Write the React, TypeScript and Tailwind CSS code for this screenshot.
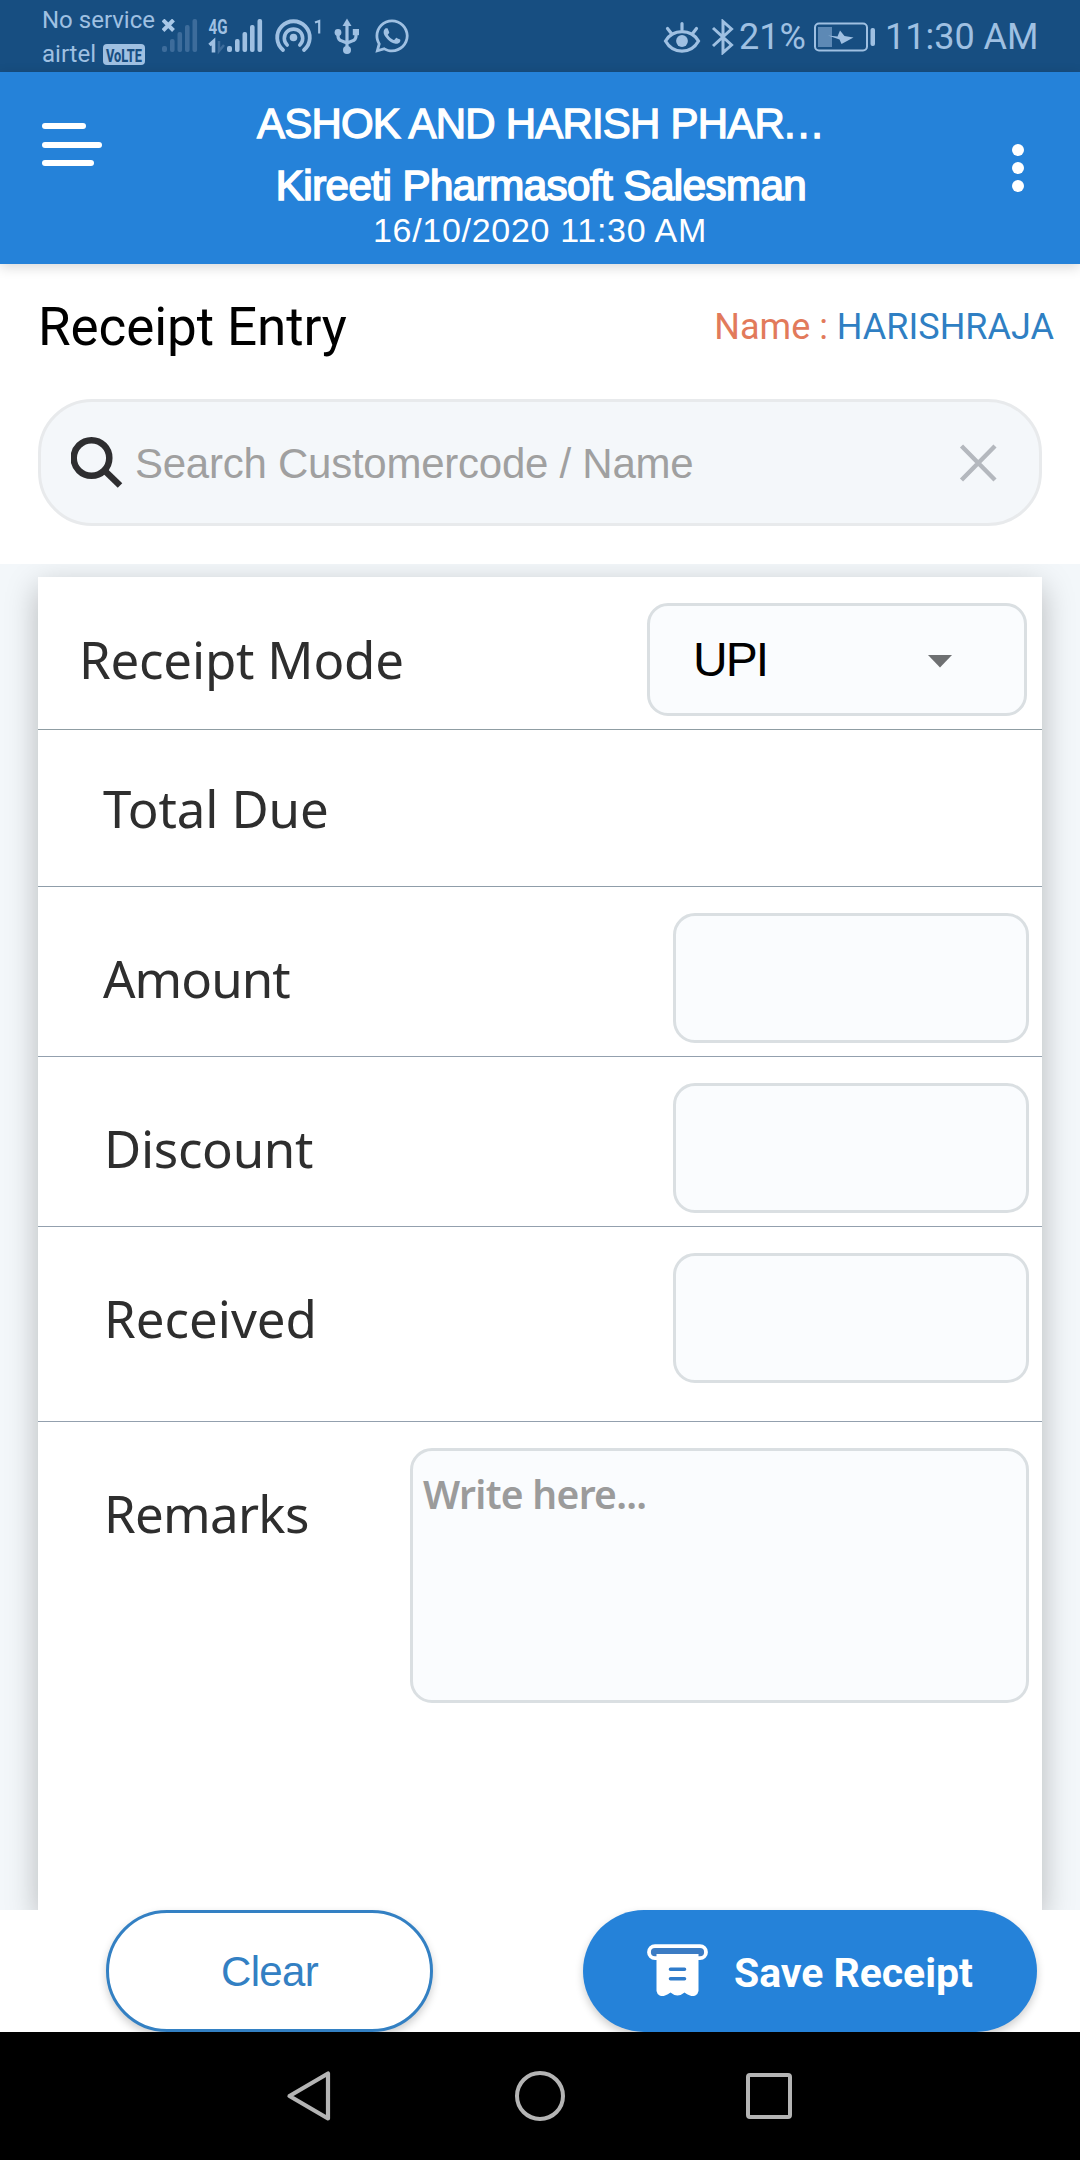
import { useState } from "react";
import { FaWhatsapp } from "react-icons/fa";

function SignalBars({ className }: { className: string }) {
  return (
    <g className={className}>
      <rect x="0" y="27" width="5" height="6" rx="2" />
      <rect x="8" y="20" width="4.6" height="13" rx="2" />
      <rect x="15.5" y="13" width="4.6" height="20" rx="2" />
      <rect x="23" y="6" width="4.6" height="27" rx="2" />
      <rect x="30.5" y="0" width="4.6" height="33" rx="2" />
    </g>
  );
}

function StatusBar() {
  return (
    <div className="flex h-[72px] items-start bg-[#174e81] pl-[42px] pr-[43px] text-[#9fc0e2]">
      <div className="mt-[3px] w-[120px] text-[24px] leading-[34px] whitespace-nowrap">
        <div>No service</div>
        <div className="flex items-center">
          airtel
          <span className="ml-[7px] flex h-[21px] w-[42px] items-center justify-center rounded-[4px] bg-[#9fc0e2]">
            <svg className="overflow-visible" width="38" height="21" viewBox="0 0 38 21">
              <text x="1" y="17.5" fontSize="19" fontWeight="800" textLength="36" lengthAdjust="spacingAndGlyphs" className="fill-[#174e81]">
                VoLTE
              </text>
            </svg>
          </span>
        </div>
      </div>
      <svg className="mt-[19px]" width="36" height="34" viewBox="0 0 36 34">
        <SignalBars className="fill-[#3d6c9b]" />
        <path d="M1 1l10.500 10.500M11.500 1l-10.500 10.500" className="stroke-[#a9c8e8]" strokeWidth="4" />
      </svg>
      <svg className="ml-[10px] mt-[18px] overflow-visible" width="56" height="36" viewBox="0 0 56 36">
        <text x="0.5" y="15.5" fontSize="20" fontWeight="700" textLength="19" lengthAdjust="spacingAndGlyphs" fill="currentColor">
          4G
        </text>
        <path d="M1.500 27L5.500 23.500v11" fill="none" stroke="currentColor" strokeWidth="3.6" />
        <path d="M11 23v10l5-6" fill="none" className="stroke-[#3d6c9b]" strokeWidth="2.5" />
        <g transform="translate(19 1)">
          <SignalBars className="fill-current" />
        </g>
      </svg>
      <svg className="ml-[10px] mt-[18px]" width="48" height="36" viewBox="0 0 48 36" fill="none" stroke="currentColor" strokeWidth="3.8" strokeLinecap="round">
        <path d="M9 32a16.300 16.300 0 1 1 21 0" />
        <path d="M13.200 27a9.200 9.200 0 1 1 12.600 0" strokeWidth="3.6" />
        <circle cx="19.5" cy="19.5" r="3.8" fill="currentColor" stroke="none" />
        <path d="M41 4.500l4.200-1.500v12.500" strokeWidth="2.2" strokeLinecap="butt" />
      </svg>
      <svg className="ml-[12px] mt-[18px]" width="26" height="37" viewBox="0 0 26 37" fill="none" stroke="currentColor" strokeWidth="3.2">
        <path d="M13 5v26M4 15v3q0 4 4 5l5 2M22 15v3q0 4-4 5l-5 2" />
        <path d="M13 0.500l4.500 7.500h-9z" fill="currentColor" stroke="none" />
        <circle cx="4" cy="14.5" r="3.4" fill="currentColor" stroke="none" />
        <path d="M18.800 11h6.200v6.200h-6.200z" fill="currentColor" stroke="none" />
        <circle cx="13" cy="32" r="4" fill="currentColor" stroke="none" />
      </svg>
      <FaWhatsapp className="ml-[13px] mt-[17px]" size={38} />

      <div className="ml-auto flex h-full items-center pt-[2px] text-[36px] leading-[72px] whitespace-nowrap">
        <svg className="shrink-0" width="38" height="34" viewBox="0 0 38 34" fill="none" stroke="currentColor" strokeWidth="3.2" strokeLinecap="round">
          <path d="M2.500 21C10 8.500 28 8.500 35.500 21C28 34.500 10 34.500 2.500 21z" />
          <circle cx="19" cy="21" r="5.9" fill="currentColor" stroke="none" />
          <path d="M19 3.500v6M4.500 8.500l3.500 4.500M33.500 8.500l-3.500 4.500" />
        </svg>
        <svg className="ml-[10px] shrink-0" width="24" height="36" viewBox="0 0 24 36" fill="none" stroke="currentColor" strokeWidth="3">
          <path d="M2 9l18.500 17-8.500 7.500V2.500l8.500 7.500L2 27" />
        </svg>
        <span className="ml-[4px] w-[69px]">21%</span>
        <svg className="ml-[5px] shrink-0" width="63" height="30" viewBox="0 0 63 30">
          <rect x="2" y="1.5" width="52" height="27" rx="4" fill="none" stroke="currentColor" strokeWidth="2" />
          <rect x="5" y="5" width="14" height="20" className="fill-[#5d89b5]" />
          <path d="M15 13.500l9.500 1 2.500-6 4.500 5.500 9 1.500-12 6.500-2-4.500z" fill="currentColor" />
          <rect x="57.5" y="6" width="4.5" height="18" rx="2" fill="currentColor" />
        </svg>
        <span className="ml-[9px] w-[152px]">11:30 AM</span>
      </div>
    </div>
  );
}

function Header() {
  return (
    <header className="relative z-10 flex h-[192px] bg-[#2582d9] font-['Liberation_Sans',sans-serif] text-white shadow-[0_3px_12px_rgba(0,0,0,0.16)]">
      <button className="ml-[42px] mt-[51px] flex h-[43px] w-[60px] flex-col justify-between">
        <span className="h-[6px] w-[44px] rounded-full bg-white" />
        <span className="h-[6px] w-[60px] rounded-full bg-white" />
        <span className="h-[6px] w-[52px] rounded-full bg-white" />
      </button>
      <div className="flex-1 pt-[21px] text-center whitespace-nowrap">
        <div className="pl-[2px] text-[42px] leading-[62px] tracking-[-0.8px] [-webkit-text-stroke:1.3px_white]">
          ASHOK AND HARISH PHAR<span className="tracking-[2px]">...</span>
        </div>
        <div className="pl-[2px] text-[42px] leading-[62px] tracking-[-0.5px] [-webkit-text-stroke:1.7px_white]">
          Kireeti Pharmasoft Salesman
        </div>
        <div className="text-[34px] leading-[27px] tracking-[0.7px]">16/10/2020 11:30 AM</div>
      </div>
      <button className="mr-[42px] mt-[72px] flex h-[48px] w-[60px] flex-col items-end justify-between pr-[14px]">
        <span className="size-[12px] rounded-full bg-white" />
        <span className="size-[12px] rounded-full bg-white" />
        <span className="size-[12px] rounded-full bg-white" />
      </button>
    </header>
  );
}

function AmountRow({ label, className }: { label: string; className: string }) {
  const [value, setValue] = useState("");

  return (
    <div className={`flex items-start justify-between border-b border-[#93a0ae] pt-[26px] pr-[13px] ${className}`}>
      <span className="leading-[130px]">{label}</span>
      <input
        className="h-[130px] w-[356px] rounded-[22px] border-[3px] border-[#dadfe2] bg-[#fafcfe] px-4"
        value={value}
        onChange={(e) => setValue(e.target.value)}
      />
    </div>
  );
}

export default function App() {
  const [search, setSearch] = useState("");
  const [remarks, setRemarks] = useState("");

  return (
    <div className="flex h-[2160px] w-[1080px] flex-col overflow-hidden bg-white font-[Roboto,sans-serif]">
      <StatusBar />
      <Header />

      <div className="flex h-[126px] items-center justify-between pl-[38px] pr-[26px] whitespace-nowrap">
        <h1 className="mt-[2px] text-[53px] tracking-[-0.1px] text-black">Receipt Entry</h1>
        <div className="text-[36px] text-[#2f7fc3]">
          <span className="text-[#e27a5b]">Name :</span> HARISHRAJA
        </div>
      </div>

      <div className="mx-[38px] mt-[9px] flex h-[127px] items-center rounded-[54px] border-[3px] border-[#e8eaec] bg-[#f4f7fa] pl-[30px] pr-[42px]">
        <svg width="54" height="54" viewBox="0 0 54 54" fill="none" className="stroke-[#2e2e30]">
          <circle cx="20.5" cy="22" r="17.8" strokeWidth="6.5" />
          <path d="M32.500 33.500l16.500 16" strokeWidth="6.5" />
        </svg>
        <input
          className="mt-[2px] ml-[10px] min-w-0 flex-1 font-['Liberation_Sans',sans-serif] text-[42px] tracking-[-0.25px] outline-none placeholder:text-[#a0a0a0]"
          placeholder="Search Customercode / Name"
          value={search}
          onChange={(e) => setSearch(e.target.value)}
        />
        <svg width="38" height="38" viewBox="0 0 38 38" className="stroke-[#b4b8be]" strokeWidth="4.4">
          <path d="M2.500 2l33.500 34M36 2L2.500 36" />
        </svg>
      </div>

      <main className="mt-[38px] flex h-[1346px] flex-col overflow-hidden bg-[#f3f7fa] px-[38px] pt-[13px]">
        <div className="flex-1 bg-white font-['Noto_Sans',sans-serif] text-[51px] text-[#2e2e2e] shadow-[0_10px_30px_rgba(0,0,0,0.26)]">
          <div className="flex h-[153px] items-start justify-between border-b border-[#8f9da3] pt-[26px] pr-[15px] pl-[41px]">
            <span className="leading-[113px] tracking-[-0.2px]">Receipt Mode</span>
            <button className="flex h-[113px] w-[380px] items-center justify-between rounded-[21px] border-[3px] border-[#dadfe2] bg-[#fafcfe] pr-[72px] pl-[43px] font-['Liberation_Sans',sans-serif] text-[48px] tracking-[-2px] text-black">
              UPI
              <svg width="24" height="13" viewBox="0 0 24 13" className="mt-[3px] fill-[#6e7072]">
                <path d="M0 0h24L12 12.500z" />
              </svg>
            </button>
          </div>
          <div className="flex h-[157px] items-center border-b border-[#8f9da9] pl-[65px] tracking-[-0.1px]">Total Due</div>
          <AmountRow label="Amount" className="h-[170px] pl-[65px] tracking-[-1px]" />
          <AmountRow label="Discount" className="h-[170px] pl-[66px] tracking-[-0.3px]" />
          <AmountRow label="Received" className="h-[195px] pl-[66px]" />
          <div className="flex items-start justify-between pt-[26px] pr-[13px] pl-[66px]">
            <span className="leading-[130px] tracking-[-0.7px]">Remarks</span>
            <textarea
              className="h-[255px] w-[619px] resize-none rounded-[22px] border-[3px] border-[#dadfe2] bg-[#fafcfe] px-[10px] pt-[16px] text-[39px] leading-[54px] font-semibold tracking-[-0.7px] outline-none placeholder:text-[#9b9b9b]"
              placeholder="Write here..."
              value={remarks}
              onChange={(e) => setRemarks(e.target.value)}
            />
          </div>
        </div>
      </main>

      <div className="flex h-[122px] justify-between pl-[106px] pr-[43px]">
        <button
          className="h-[122px] w-[327px] rounded-full border-[3px] border-[#3380c3] bg-white pt-[1px] font-['Liberation_Sans',sans-serif] text-[42px] tracking-[-0.7px] text-[#3380c3] shadow-[0_4px_8px_rgba(0,0,0,0.2)]"
          onClick={() => {
            setSearch("");
            setRemarks("");
          }}
        >
          Clear
        </button>
        <button className="flex h-[122px] w-[454px] items-center rounded-full bg-[#2582d9] pl-[64px] text-[41px] font-bold whitespace-nowrap text-white shadow-[0_4px_8px_rgba(0,0,0,0.2)]">
          <svg width="61" height="54" viewBox="0 0 61 54">
            <rect x="2" y="2.2" width="57" height="12" rx="6" fill="#3c7cc4" stroke="white" strokeWidth="3.8" />
            <path d="M9.500 10h42v37a6 6 0 0 1-8.500 4.500q-3-1-5.500-3q-7 6-14 0q-2.500 2-5.500 3a6 6 0 0 1-8.500-4.500z" fill="white" />
            <path d="M23.500 25.200h14M23.500 34.800h14" stroke="#2f7ccb" strokeWidth="3.6" strokeLinecap="round" />
          </svg>
          <span className="mt-[5px] ml-[26px] tracking-[-0.05px]">Save Receipt</span>
        </button>
      </div>

      <nav className="relative z-10 flex h-[128px] items-center bg-black">
        <svg className="ml-[286px]" width="46" height="52" viewBox="0 0 46 52" fill="none" stroke="#b4b4b4" strokeWidth="4.2" strokeLinejoin="round">
          <path d="M42 3.500v45L3.500 26z" />
        </svg>
        <div className="ml-[183px] size-[50px] rounded-full border-[4.500px] border-[#b4b4b4]" />
        <div className="ml-[181px] size-[46px] rounded-[4px] border-[4.500px] border-[#b4b4b4]" />
      </nav>
    </div>
  );
}
